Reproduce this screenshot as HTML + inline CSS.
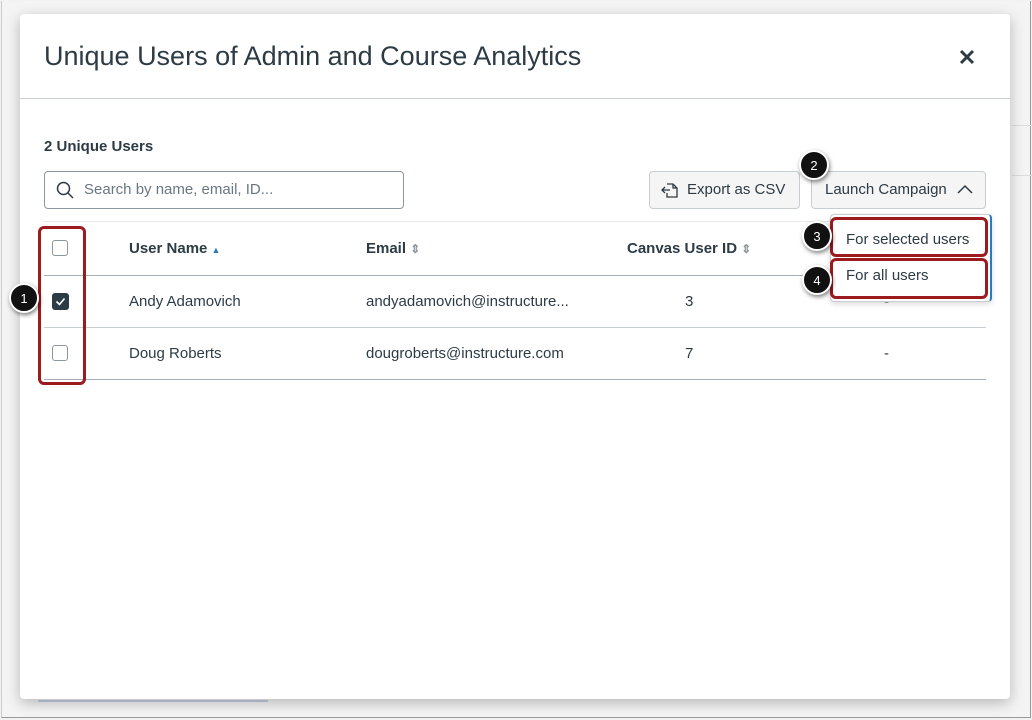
<!DOCTYPE html>
<html><head><style>
body{margin:0;width:1032px;height:720px;background:#f2f2f2;position:relative;overflow:hidden;font-family:"Liberation Sans",sans-serif;color:#2d3b45}
.frame{position:absolute;left:1px;top:1px;width:1028px;height:716px;border:1px solid #9a9a9a;border-top:none;border-left:1px solid #ccc;background:#f4f4f4}
.modal{position:absolute;left:20px;top:14px;width:990px;height:685px;background:#fff;border-radius:4px;box-shadow:0 4px 14px rgba(0,0,0,.25)}
.abs{position:absolute}
.hr{position:absolute;height:1px;background:#c7cdd1}
.btn{position:absolute;background:#f5f5f5;border:1px solid #c7cdd1;border-radius:4px;font-size:15px;color:#2d3b45;box-sizing:border-box;line-height:36px}
.cb{position:absolute;width:14px;height:14px;border:1.5px solid #8b969e;border-radius:3px;background:#fff}
.badge{position:absolute;border-radius:50%;background:#111;color:#fff;font-size:13px;text-align:center;line-height:27px;border:2px solid #fff;box-shadow:1px 2px 4px rgba(0,0,0,.5);box-sizing:border-box;width:30px;height:30px}
.red{position:absolute;border:3px solid #9b1b1f;border-radius:6px;box-sizing:border-box}
.th{font-weight:bold;font-size:15px}
.t{position:absolute;font-size:15px;white-space:nowrap}
.s{color:#8b969e;font-size:12px}
</style></head><body>
<div class="frame"></div>
<div class="abs" style="left:1012px;top:125px;width:20px;height:1px;background:#ddd"></div>
<div class="abs" style="left:1012px;top:175px;width:20px;height:1px;background:#ddd"></div>
<div class="modal">
 <div class="t" style="left:24px;top:27px;font-size:27px;color:#2d3b45">Unique Users of Admin and Course Analytics</div>
 <svg class="abs" style="left:939px;top:35px" width="16" height="16" viewBox="0 0 16 16"><path d="M2 2L14 14M14 2L2 14" stroke="#2d3b45" stroke-width="3"/></svg>
 <div class="hr" style="left:0;top:84px;width:990px"></div>
 <div class="t" style="left:24px;top:124px;font-weight:bold;font-size:15px">2 Unique Users</div>
 <div class="abs" style="left:24px;top:157px;width:360px;height:38px;border:1px solid #8b969e;border-radius:4px;box-sizing:border-box"></div>
 <svg class="abs" style="left:36px;top:167px" width="18" height="18" viewBox="0 0 18 18"><circle cx="7.5" cy="7.5" r="6" fill="none" stroke="#2d3b45" stroke-width="1.5"/><path d="M12 12L17 17" stroke="#2d3b45" stroke-width="1.5"/></svg>
 <div class="t" style="left:64px;top:167px;color:#6b7780">Search by name, email, ID...</div>
 <div class="btn" style="left:629px;top:157px;width:151px;height:38px;padding-left:37px">Export as CSV</div>
 <svg class="abs" style="left:641px;top:168px" width="18" height="16" viewBox="0 0 18 16"><path d="M6 2h6l4 4v9H6V11M12 2v4h4M1 8h8M4 5L1 8l3 3" fill="none" stroke="#2d3b45" stroke-width="1.3"/></svg>
 <div class="btn" style="left:791px;top:157px;width:175px;height:38px;padding-left:13px">Launch Campaign</div>
 <svg class="abs" style="left:937px;top:170px" width="16" height="10" viewBox="0 0 16 10"><path d="M1 9L8 2l7 7" fill="none" stroke="#2d3b45" stroke-width="1.5"/></svg>
 <div class="hr" style="left:24px;top:207px;width:942px;background:#e6e8ea"></div>
 <div class="cb" style="left:32px;top:226px"></div>
 <div class="t th" style="left:109px;top:226px">User Name <span style="color:#2b7abc;font-size:9px">▲</span></div>
 <div class="t th" style="left:346px;top:226px">Email <span class="s">⇕</span></div>
 <div class="t th" style="left:607px;top:226px">Canvas User ID <span class="s">⇕</span></div>
 <div class="hr" style="left:24px;top:261px;width:942px;background:#a5afb5"></div>
 <div class="abs" style="left:32px;top:279px;width:17px;height:17px;border-radius:3px;background:#2d3b45"></div>
 <svg class="abs" style="left:35px;top:282px" width="11" height="11" viewBox="0 0 11 11"><path d="M1.5 5.5l3 3 5-6" fill="none" stroke="#fff" stroke-width="1.6"/></svg>
 <div class="t" style="left:109px;top:279px">Andy Adamovich</div>
 <div class="t" style="left:346px;top:279px">andyadamovich@instructure...</div>
 <div class="t" style="left:665px;top:279px">3</div>
 <div class="t" style="left:864px;top:279px">-</div>
 <div class="hr" style="left:24px;top:313px;width:942px;background:#c7cdd1"></div>
 <div class="cb" style="left:32px;top:331px"></div>
 <div class="t" style="left:109px;top:331px">Doug Roberts</div>
 <div class="t" style="left:346px;top:331px">dougroberts@instructure.com</div>
 <div class="t" style="left:665px;top:331px">7</div>
 <div class="t" style="left:864px;top:331px">-</div>
 <div class="hr" style="left:24px;top:365px;width:942px;background:#a5afb5"></div>
 <div class="red" style="left:18px;top:212px;width:48px;height:159px"></div>
 <div class="abs" style="left:810px;top:200px;width:159px;height:86px;background:#fff;border:1px solid #c7cdd1;border-right:2px solid #2b7abc;border-radius:4px;box-shadow:0 2px 6px rgba(0,0,0,.15)"></div>
 <div class="red" style="left:810px;top:203px;width:158px;height:40px;background:#fff"></div>
 <div class="t" style="left:826px;top:217px;font-size:15px">For selected users</div>
 <div class="red" style="left:810px;top:244px;width:158px;height:41px;background:#fff"></div>
 <div class="t" style="left:826px;top:253px;font-size:15px">For all users</div>
</div>
<div class="badge" style="left:799px;top:150px">2</div>
<div class="badge" style="left:802px;top:221px">3</div>
<div class="badge" style="left:802px;top:265px">4</div>
<div class="badge" style="left:9px;top:283px">1</div>
<div class="abs" style="left:38px;top:700px;width:230px;height:2px;background:#a5afc0"></div>
</body></html>
